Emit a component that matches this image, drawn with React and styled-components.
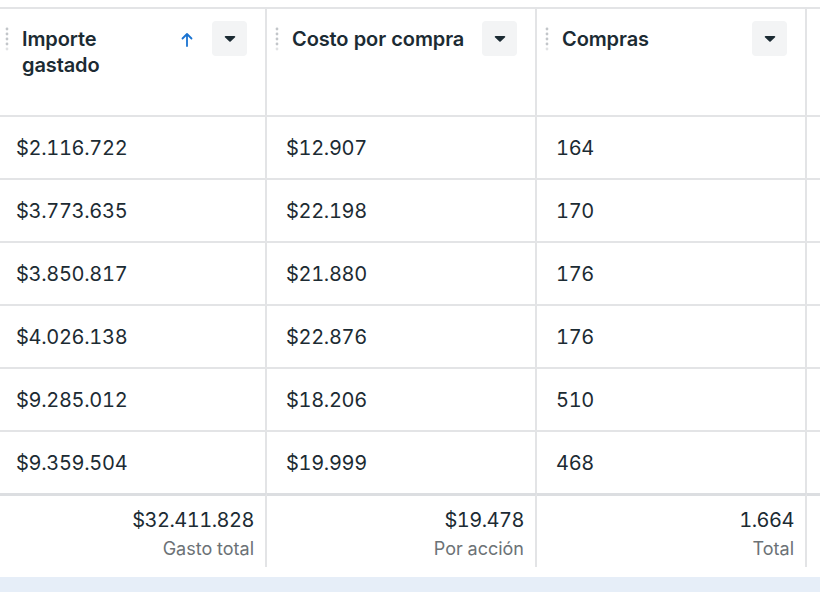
import React from "react";
import styled, { createGlobalStyle } from "styled-components";

const rows = [
  ["$2.116.722", "$12.907", "164"],
  ["$3.773.635", "$22.198", "170"],
  ["$3.850.817", "$21.880", "176"],
  ["$4.026.138", "$22.876", "176"],
  ["$9.285.012", "$18.206", "510"],
  ["$9.359.504", "$19.999", "468"],
];

const columns = [
  { title: "Importe gastado", sorted: true, total: "$32.411.828", label: "Gasto total", narrow: true },
  { title: "Costo por compra", total: "$19.478", label: "Por acción" },
  { title: "Compras", total: "1.664", label: "Total" },
];

const GlobalStyle = createGlobalStyle`
  *, *::before, *::after { box-sizing: border-box; }
  body {
    margin: 0;
    background: #ffffff;
    font-family: Inter, Roboto, "Liberation Sans", Arial, sans-serif;
    color: #1c2b33;
  }
`;

const Page = styled.div`
  width: 820px;
  height: 593px;
  overflow: hidden;
  padding-top: 7px;
  display: flex;
  flex-direction: column;
`;

const Table = styled.div`
  margin-left: -3px;
  width: 1100px;
  display: grid;
  grid-template-columns: 270px 270px 270px 290px;
  border-top: 2px solid #e3e4e6;
  font-variant-numeric: tabular-nums;
`;

const HeaderCell = styled.div`
  height: 108px;
  border-bottom: 2px solid #e3e4e6;
  border-right: 2px solid #e3e4e6;
  display: flex;
  align-items: flex-start;
  padding: 12px 18px 0 8px;
`;

const Grip = styled.svg`
  flex: none;
  margin-top: 6px;
`;

const Title = styled.div`
  flex: 1;
  margin-left: 13px;
  padding-right: ${(p) => (p.$narrow ? "60px" : "0")};
  font-size: 20px;
  font-weight: 600;
  line-height: 26px;
  margin-top: 5px;
  letter-spacing: -0.1px;
`;

const SortArrow = styled.svg`
  flex: none;
  margin: 11px 19px 0 0;
`;

const MenuButton = styled.div`
  flex: none;
  width: 35px;
  height: 35px;
  border-radius: 4px;
  background: #f3f4f5;
  display: flex;
  align-items: center;
  justify-content: center;
`;

const Cell = styled.div`
  height: ${(p) => (p.$last ? "61px" : "63px")};
  border-right: 2px solid #e3e4e6;
  border-bottom: ${(p) => (p.$last ? "none" : "2px solid #e3e4e6")};
  display: flex;
  align-items: center;
  padding: 1px 0 0 19px;
  font-size: 20px;
  letter-spacing: -0.3px;
  color: #1c2b33;
`;

const FooterCell = styled.div`
  height: 74px;
  border-top: 3px solid #dcdee1;
  border-right: 2px solid #e3e4e6;
  display: flex;
  flex-direction: column;
  align-items: flex-end;
  padding: 12px 11px 0 0;
`;

const Total = styled.div`
  font-size: 20px;
  line-height: 25px;
  letter-spacing: -0.5px;
`;

const Label = styled.div`
  margin-top: 6px;
  font-size: 18px;
  line-height: 20px;
  color: #6c7276;
`;

const BlueBar = styled.div`
  margin-top: 10px;
  height: 15px;
  background: #e6eef8;
`;

const GripIcon = () => (
  <Grip width="4" height="24" viewBox="0 0 4 24">
    {[2, 7, 12, 17, 22].map((y, i) => (
      <circle key={y} cx="2" cy={y} r="1.4" fill="#c3c6ca" opacity={i === 4 ? 0.5 : 1} />
    ))}
  </Grip>
);

const Caret = () => (
  <svg width="12" height="7" viewBox="0 0 12 7">
    <path d="M1.5 1h9a.8.8 0 0 1 .6 1.3L6.6 6.4a.8.8 0 0 1-1.2 0L.9 2.3A.8.8 0 0 1 1.5 1z" fill="#1c2b33" />
  </svg>
);

const App = () => (
  <>
    <GlobalStyle />
    <Page>
      <Table>
        {columns.map((c) => (
          <HeaderCell key={c.title}>
            <GripIcon />
            <Title $narrow={c.narrow}>{c.title}</Title>
            {c.sorted && (
              <SortArrow width="12" height="15" viewBox="0 0 12 15">
                <path d="M6 14V2M1.5 6.5L6 2l4.5 4.5" stroke="#1a73d1" strokeWidth="1.8" fill="none" strokeLinecap="round" strokeLinejoin="round" />
              </SortArrow>
            )}
            <MenuButton>
              <Caret />
            </MenuButton>
          </HeaderCell>
        ))}
        <HeaderCell />
        {rows.map((r, i) => (
          <React.Fragment key={i}>
            {r.map((v, j) => (
              <Cell key={j} $last={i === rows.length - 1}>
                {v}
              </Cell>
            ))}
            <Cell $last={i === rows.length - 1} />
          </React.Fragment>
        ))}
        {columns.map((c) => (
          <FooterCell key={c.label}>
            <Total>{c.total}</Total>
            <Label>{c.label}</Label>
          </FooterCell>
        ))}
        <FooterCell />
      </Table>
      <BlueBar />
    </Page>
  </>
);

export default App;
